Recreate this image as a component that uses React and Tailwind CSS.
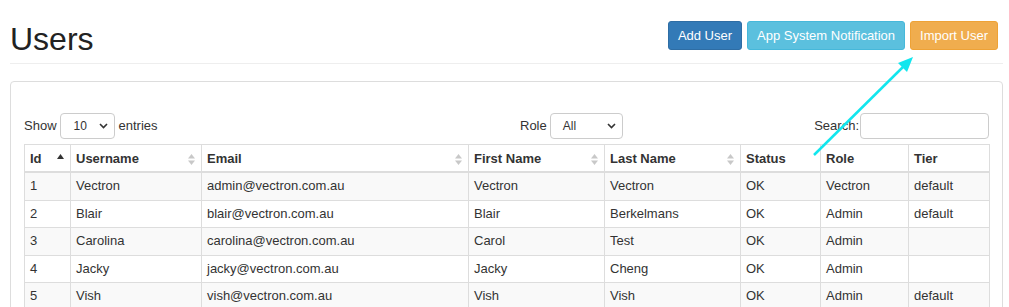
import React from "react";

const users = [
    { id: 1, username: "Vectron", email: "admin@vectron.com.au", first: "Vectron", last: "Vectron", status: "OK", role: "Vectron", tier: "default" },
    { id: 2, username: "Blair", email: "blair@vectron.com.au", first: "Blair", last: "Berkelmans", status: "OK", role: "Admin", tier: "default" },
    { id: 3, username: "Carolina", email: "carolina@vectron.com.au", first: "Carol", last: "Test", status: "OK", role: "Admin", tier: "" },
    { id: 4, username: "Jacky", email: "jacky@vectron.com.au", first: "Jacky", last: "Cheng", status: "OK", role: "Admin", tier: "" },
    { id: 5, username: "Vish", email: "vish@vectron.com.au", first: "Vish", last: "Vish", status: "OK", role: "Admin", tier: "default" },
];

const columns = [
    { key: "id", label: "Id", width: "w-[46px]", sort: "asc" },
    { key: "username", label: "Username", width: "w-[131px]", sort: "both" },
    { key: "email", label: "Email", width: "w-[267px]", sort: "both" },
    { key: "first", label: "First Name", width: "w-[136px]", sort: "both" },
    { key: "last", label: "Last Name", width: "w-[136px]", sort: "both" },
    { key: "status", label: "Status", width: "w-[80px]" },
    { key: "role", label: "Role", width: "w-[88px]" },
    { key: "tier", label: "Tier", width: "w-[81px]" },
];

const Chevron = () => (
    <svg width="9" height="6" viewBox="0 0 9 6" fill="none">
        <path d="M1 1l3.5 3.5L8 1" stroke="#333" strokeWidth="1.6" />
    </svg>
);

const SortIcon = ({ type }) => {
    if (type === "asc") {
        return (
            <svg width="7" height="5" viewBox="0 0 7 5" className="absolute right-[6px] top-[9px]">
                <path d="M0 5L3.5 0L7 5Z" fill="#333" />
            </svg>
        );
    }
    return (
        <svg width="7" height="11" viewBox="0 0 7 11" className="absolute right-[6px] top-[9px]">
            <path d="M0 4.5L3.5 0L7 4.5Z" fill="#c8c8c8" />
            <path d="M0 6.5L3.5 11L7 6.5Z" fill="#c8c8c8" />
        </svg>
    );
};

const App = () => {
    return (
        <div
            className="relative w-[1009px] h-[307px] overflow-hidden bg-white text-[#333]"
            style={{ fontFamily: '"Liberation Sans", Arial, sans-serif' }}
        >
            <div className="ml-[10px] w-[993px]">
                <div className="flex items-start justify-between h-[64px] border-b border-[#eee]">
                    <h1 className="mt-[23px] text-[32px] leading-[32px] font-normal text-[#222]">Users</h1>
                    <div className="flex gap-[5px] mt-[21px] mr-[5px]">
                        <button className="h-[29px] px-[9px] rounded-[3px] bg-[#337ab7] border border-[#2e6da4] text-white text-[13px]">
                            Add User
                        </button>
                        <button className="h-[29px] px-[9px] rounded-[3px] bg-[#5bc0de] border border-[#46b8da] text-white text-[13px]">
                            App System Notification
                        </button>
                        <button className="h-[29px] px-[9px] rounded-[3px] bg-[#f0ad4e] border border-[#eea236] text-white text-[13px]">
                            Import User
                        </button>
                    </div>
                </div>

                <div className="mt-[17px] border border-[#ddd] rounded-[4px] px-[13px] pt-[31px] pb-[20px]">
                    <div className="flex items-center h-[26px] text-[13px]">
                        <div className="flex items-center w-[496px]">
                            <span>Show</span>
                            <div className="ml-[3px] flex items-center justify-between w-[55px] h-[26px] border border-[#ccc] rounded-[4px] pl-[13px] pr-[6px] text-[12px]">
                                <span>10</span>
                                <Chevron />
                            </div>
                            <span className="ml-[4px]">entries</span>
                        </div>
                        <div className="flex items-center">
                            <span>Role</span>
                            <div className="ml-[3px] flex items-center justify-between w-[73px] h-[26px] border border-[#ccc] rounded-[4px] pl-[12px] pr-[6px] text-[12px]">
                                <span>All</span>
                                <Chevron />
                            </div>
                        </div>
                        <div className="ml-auto flex items-center">
                            <span>Search:</span>
                            <div className="ml-[1px] w-[129px] h-[26px] border border-[#ccc] rounded-[4px]" />
                        </div>
                    </div>

                    <table className="mt-[5px] w-[965px] border-collapse table-fixed text-[13px]">
                        <thead>
                            <tr>
                                {columns.map((col) => (
                                    <th
                                        key={col.key}
                                        className={`${col.width} relative text-left font-bold px-[5px] pt-[5px] pb-[3px] leading-[18px] border border-[#ddd] border-b-2`}
                                    >
                                        {col.label}
                                        {col.sort && <SortIcon type={col.sort} />}
                                    </th>
                                ))}
                            </tr>
                        </thead>
                        <tbody>
                            {users.map((user, i) => (
                                <tr key={user.id} className={i % 2 === 0 ? "bg-[#f9f9f9]" : "bg-white"}>
                                    {columns.map((col) => (
                                        <td
                                            key={col.key}
                                            className="px-[5px] py-[4px] leading-[18.5px] border border-[#ddd]"
                                        >
                                            {user[col.key]}
                                        </td>
                                    ))}
                                </tr>
                            ))}
                        </tbody>
                    </table>
                </div>
            </div>

            <svg className="absolute left-0 top-0 pointer-events-none" width="1009" height="307">
                <line x1="814" y1="155" x2="905" y2="65" stroke="#12e6ee" strokeWidth="2.5" />
                <path d="M913 57L898 63L907 72Z" fill="#12e6ee" />
            </svg>
        </div>
    );
};

export default App;
